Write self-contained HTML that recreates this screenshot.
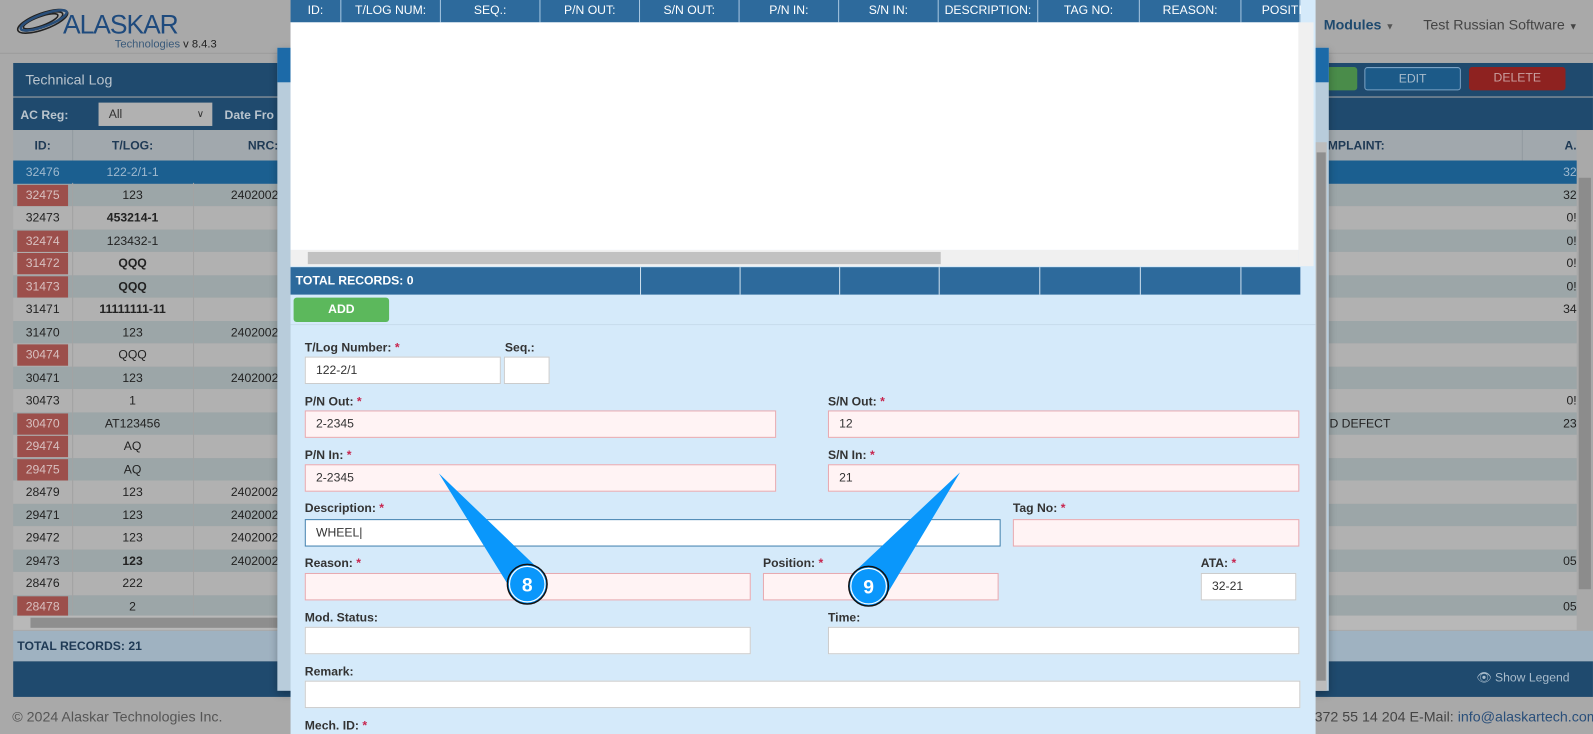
<!DOCTYPE html>
<html><head><meta charset="utf-8">
<style>
*{box-sizing:border-box;margin:0;padding:0}
html,body{width:1593px;height:734px;overflow:hidden;background:#a9a9a9}
body{position:relative;font-family:"Liberation Sans",Arial,sans-serif;font-size:12px;color:#222}
#wrap{position:absolute;left:0;top:0;width:1568px;height:723px;transform:scale(1.0159);transform-origin:0 0}
.a{position:absolute;white-space:nowrap}
.row{position:absolute;left:13px;width:1539px;height:22.5px;line-height:22.5px;font-size:12px;color:#222}
.row.o{background:#9ca6a8}.row.e{background:#b1b1b1}
.row span{position:absolute;top:0;height:22px;text-align:center}
.c1{left:0;width:58px}.c2{left:58px;width:119px}.c3{left:177px;width:84px;text-align:right!important}
.c4{left:1287px}.c5{left:1486px;width:53px;text-align:right!important}
.red{background:#9c4f4b;color:#d8c0c0;left:4px!important;width:50px!important;top:1px!important;height:21px!important;line-height:21px}
.b{font-weight:bold}
.vl{position:absolute;top:0;bottom:0;width:1px;background:#a0a0a0}
.th{position:absolute;top:0;height:22px;line-height:20px;color:#fff;text-align:center;font-size:12px;border-right:1px solid #a7c6e0;font-family:"Liberation Sans Narrow","Liberation Sans",sans-serif}
.lbl{position:absolute;font-weight:bold;font-size:12px;color:#333}
.lbl i{font-style:normal;color:#c7254e}
.in{position:absolute;height:27px;border:1px solid #e7a9b0;background:#fff3f4;padding-left:10px;line-height:25px;font-size:12px;color:#333}
.w{background:#fff;border-color:#ccc}
</style></head><body><div id="wrap">

<svg class="a" style="left:14px;top:6px" width="60" height="30" viewBox="0 0 60 30"><g fill="none" stroke="#222" stroke-width="1.6"><ellipse cx="28" cy="15" rx="26" ry="8" transform="rotate(-20 28 15)"/><ellipse cx="27" cy="15" rx="22" ry="6" transform="rotate(-20 27 15)"/><ellipse cx="26" cy="15" rx="18" ry="4.5" transform="rotate(-20 26 15)"/></g><ellipse cx="29" cy="14" rx="24" ry="6" transform="rotate(-20 29 14)" fill="none" stroke="#2a4f7a" stroke-width="2.5"/></svg>
<div class="a" style="left:62px;top:9px;font-size:26px;color:#1e4a7d;letter-spacing:-1px">ALASKAR</div>
<div class="a" style="left:113px;top:38px;font-size:11px;color:#3a5a7a">Technologies <span style="color:#222">v 8.4.3</span></div>
<div class="a" style="left:0;top:52px;width:1593px;height:1px;background:#9c9c9c"></div>
<div class="a" style="left:1303px;top:16px;font-size:14px;font-weight:bold;color:#1f4a6e">Modules <span style="font-size:9px;color:#555">▼</span></div>
<div class="a" style="left:1401px;top:16px;font-size:14px;color:#444">Test Russian Software <span style="font-size:9px">▼</span></div>

<div class="a" style="left:13px;top:62px;width:1555px;height:33px;background:#1f4a6e"></div>
<div class="a" style="left:25px;top:70px;font-size:14px;color:#b9c4cd">Technical Log</div>
<div class="a" style="left:1306px;top:66px;width:30px;height:23px;background:#4a8c4a;border-radius:3px"></div>
<div class="a" style="left:1343px;top:66px;width:95px;height:23px;border:1px solid #7aa2c4;border-radius:3px;background:#1c5a88;color:#a9bccc;text-align:center;line-height:21px">EDIT</div>
<div class="a" style="left:1446px;top:66px;width:95px;height:23px;border-radius:3px;background:#8e2220;color:#c9a0a0;text-align:center;line-height:21px">DELETE</div>
<div class="a" style="left:13px;top:96px;width:1555px;height:32px;background:#1f4a6e"></div>
<div class="a" style="left:20px;top:106px;font-weight:bold;color:#b9c4cd">AC Reg:</div>
<div class="a" style="left:97px;top:101px;width:112px;height:23px;background:#b1b1b1;padding-left:10px;line-height:23px;color:#333">All<span style="position:absolute;right:8px;font-size:10px">&#8744;</span></div>
<div class="a" style="left:221px;top:106px;font-weight:bold;color:#b9c4cd">Date Fro</div>
<div class="a" style="left:13px;top:128px;width:1539px;height:30px;background:#a1a8ad;font-weight:bold;color:#1f3a55;line-height:30px">
 <span class="a" style="left:0;width:58px;text-align:center">ID:</span><span class="a" style="left:58px;width:119px;text-align:center">T/LOG:</span><span class="a" style="left:177px;width:84px;text-align:right">NRC:</span>
 <span class="a" style="left:1294px">MPLAINT:</span><span class="a" style="left:1486px;width:53px;text-align:right">A.</span>
 <div class="vl" style="left:58px;background:#929aa0"></div><div class="vl" style="left:177px;background:#929aa0"></div><div class="vl" style="left:1485px;background:#929aa0"></div>
</div>
<div class="a" style="left:1552px;top:128px;width:16px;height:493px;background:#a9a9a9"></div>
<div class="a" style="left:1554px;top:175px;width:12px;height:405px;background:#8c8c8c"></div>

<div class="row" style="top:158px;background:#1b5f90;color:#9fb9ce"><span class="c1">32476</span><span class="c2">122-2/1-1</span><span class="c5">32</span></div>
<div class="row o" style="top:180.5px"><span class="c1 red">32475</span><span class="c2">123</span><span class="c3">2402002</span><span class="c5">32</span></div>
<div class="row e" style="top:203px"><span class="c1">32473</span><span class="c2 b">453214-1</span><span class="c5">0!</span></div>
<div class="row o" style="top:225.5px"><span class="c1 red">32474</span><span class="c2">123432-1</span><span class="c5">0!</span></div>
<div class="row e" style="top:248px"><span class="c1 red">31472</span><span class="c2 b">QQQ</span><span class="c5">0!</span></div>
<div class="row o" style="top:270.5px"><span class="c1 red">31473</span><span class="c2 b">QQQ</span><span class="c5">0!</span></div>
<div class="row e" style="top:293px"><span class="c1">31471</span><span class="c2 b">11111111-11</span><span class="c5">34</span></div>
<div class="row o" style="top:315.5px"><span class="c1">31470</span><span class="c2">123</span><span class="c3">2402002</span></div>
<div class="row e" style="top:338px"><span class="c1 red">30474</span><span class="c2">QQQ</span></div>
<div class="row o" style="top:360.5px"><span class="c1">30471</span><span class="c2">123</span><span class="c3">2402002</span></div>
<div class="row e" style="top:383px"><span class="c1">30473</span><span class="c2">1</span><span class="c5">0!</span></div>
<div class="row o" style="top:405.5px"><span class="c1 red">30470</span><span class="c2">AT123456</span><span class="c4">ND DEFECT</span><span class="c5">23</span></div>
<div class="row e" style="top:428px"><span class="c1 red">29474</span><span class="c2">AQ</span></div>
<div class="row o" style="top:450.5px"><span class="c1 red">29475</span><span class="c2">AQ</span></div>
<div class="row e" style="top:473px"><span class="c1">28479</span><span class="c2">123</span><span class="c3">2402002</span></div>
<div class="row o" style="top:495.5px"><span class="c1">29471</span><span class="c2">123</span><span class="c3">2402002</span></div>
<div class="row e" style="top:518px"><span class="c1">29472</span><span class="c2">123</span><span class="c3">2402002</span></div>
<div class="row o" style="top:540.5px"><span class="c1">29473</span><span class="c2 b">123</span><span class="c3">2402002</span><span class="c5">05</span></div>
<div class="row e" style="top:563px"><span class="c1">28476</span><span class="c2">222</span></div>
<div class="row o" style="top:585.5px;height:20px"><span class="c1 red">28478</span><span class="c2">2</span><span class="c5">05</span></div>
<div class="a" style="left:71px;top:180px;width:1px;height:426px;background:#a3a3a3"></div>
<div class="a" style="left:190px;top:180px;width:1px;height:426px;background:#a3a3a3"></div>
<div class="a" style="left:13px;top:606px;width:1539px;height:14px;background:#b8b8b8"></div>
<div class="a" style="left:30px;top:608px;width:245px;height:10px;background:#8e8e8e"></div>
<div class="a" style="left:13px;top:621px;width:1555px;height:30px;background:#9fb2c1"></div>
<div class="a" style="left:17px;top:629px;font-weight:bold;color:#1f3a55">TOTAL RECORDS: 21</div>
<div class="a" style="left:13px;top:651px;width:1555px;height:35px;background:#1f4a6e"></div>
<div class="a" style="left:1453px;top:660px;font-size:12px;color:#a9bccc">&#128065; Show Legend</div>
<div class="a" style="left:12px;top:697px;font-size:14px;color:#555">© 2024 Alaskar Technologies Inc.</div>
<div class="a" style="left:1294px;top:697px;font-size:14px;color:#444">372 55 14 204 E-Mail: <span style="color:#2a4f7a">info@alaskartech.com</span></div>

<div class="a" style="left:273px;top:47px;width:1035px;height:633px;background:#b8ccdb;box-shadow:0 3px 8px rgba(0,0,0,.3)"></div>
<div class="a" style="left:273px;top:47px;width:1035px;height:34px;background:#1c6aa8"></div>
<div class="a" style="left:1295px;top:140px;width:11px;height:540px;background:#bcbcbc"></div>
<div class="a" style="left:1296px;top:150px;width:9px;height:520px;background:#8f8f8f"></div>

<div class="a" style="left:286px;top:0;width:1009px;height:734px;background:#d5eafa"></div>
<div class="a" style="left:286px;top:0;width:994px;height:22px;background:#2d6a9c">
 <div class="th" style="left:0;width:50px">ID:</div><div class="th" style="left:50px;width:98px">T/LOG NUM:</div><div class="th" style="left:148px;width:98px">SEQ.:</div><div class="th" style="left:246px;width:98px">P/N OUT:</div><div class="th" style="left:344px;width:98px">S/N OUT:</div><div class="th" style="left:442px;width:98px">P/N IN:</div><div class="th" style="left:540px;width:98px">S/N IN:</div><div class="th" style="left:638px;width:98px">DESCRIPTION:</div><div class="th" style="left:736px;width:100px">TAG NO:</div><div class="th" style="left:836px;width:100px">REASON:</div><div class="th" style="left:936px;width:58px;text-align:left;padding-left:20px">POSITI</div>
</div>
<div class="a" style="left:286px;top:22px;width:994px;height:224px;background:#fff"></div>
<div class="a" style="left:1278px;top:22px;width:15px;height:240px;background:#f0f0f0"></div>
<div class="a" style="left:286px;top:246px;width:992px;height:16px;background:#f0f0f0"></div>
<div class="a" style="left:303px;top:248px;width:623px;height:12px;background:#c1c1c1"></div>
<div class="a" style="left:286px;top:263px;width:994px;height:27px;background:#2d6a9c"></div>
<div class="a" style="left:630px;top:263px;width:1px;height:27px;background:#cfe0ee;box-shadow:98px 0 #cfe0ee,196px 0 #cfe0ee,294px 0 #cfe0ee,393px 0 #cfe0ee,492px 0 #cfe0ee,591px 0 #cfe0ee"></div>
<div class="a" style="left:291px;top:269px;font-weight:bold;color:#fff">TOTAL RECORDS: 0</div>
<div class="a" style="left:289px;top:293px;width:94px;height:24px;background:#5cb85c;border-radius:3px;color:#fff;font-weight:bold;text-align:center;line-height:23px">ADD</div>
<div class="a" style="left:286px;top:319px;width:1009px;height:1px;background:#c7dcec"></div>

<div class="lbl" style="left:300px;top:335px">T/Log Number: <i>*</i></div>
<div class="lbl" style="left:497px;top:335px">Seq.:</div>
<div class="in w" style="left:300px;top:351px;width:193px">122-2/1</div>
<div class="in w" style="left:496px;top:351px;width:45px"></div>

<div class="lbl" style="left:300px;top:388px">P/N Out: <i>*</i></div>
<div class="lbl" style="left:815px;top:388px">S/N Out: <i>*</i></div>
<div class="in" style="left:300px;top:404px;width:464px">2-2345</div>
<div class="in" style="left:815px;top:404px;width:464px">12</div>

<div class="lbl" style="left:300px;top:441px">P/N In: <i>*</i></div>
<div class="lbl" style="left:815px;top:441px">S/N In: <i>*</i></div>
<div class="in" style="left:300px;top:457px;width:464px">2-2345</div>
<div class="in" style="left:815px;top:457px;width:464px">21</div>

<div class="lbl" style="left:300px;top:493px">Description: <i>*</i></div>
<div class="lbl" style="left:997px;top:493px">Tag No: <i>*</i></div>
<div class="in" style="left:300px;top:511px;width:685px;border-color:#3f7fae;background:#fff">WHEEL|</div>
<div class="in" style="left:997px;top:511px;width:282px"></div>

<div class="lbl" style="left:300px;top:547px">Reason: <i>*</i></div>
<div class="lbl" style="left:751px;top:547px">Position: <i>*</i></div>
<div class="lbl" style="left:1182px;top:547px">ATA: <i>*</i></div>
<div class="in" style="left:300px;top:564px;width:439px"></div>
<div class="in" style="left:751px;top:564px;width:232px"></div>
<div class="in w" style="left:1182px;top:564px;width:94px">32-21</div>

<div class="lbl" style="left:300px;top:601px">Mod. Status:</div>
<div class="lbl" style="left:815px;top:601px">Time:</div>
<div class="in w" style="left:300px;top:617px;width:439px"></div>
<div class="in w" style="left:815px;top:617px;width:464px"></div>

<div class="lbl" style="left:300px;top:654px">Remark:</div>
<div class="in w" style="left:300px;top:670px;width:980px"></div>
<div class="lbl" style="left:300px;top:707px">Mech. ID: <i>*</i></div>

<svg class="a" style="left:0;top:0" width="1593" height="734">
 <polygon points="432,466 530,560 506,585" fill="#0a97fb"/>
 <polygon points="945,465 870,590 842,562" fill="#0a97fb"/>
 <g><circle cx="519" cy="575" r="19.5" fill="#0a97fb" stroke="#111" stroke-width="1.5"/><circle cx="519" cy="575" r="17.5" fill="none" stroke="#fff" stroke-width="1.2"/>
 <text x="519" y="582" font-family="Liberation Sans" font-weight="bold" font-size="19" fill="#fff" text-anchor="middle">8</text></g>
 <g><circle cx="855" cy="577" r="19.5" fill="#0a97fb" stroke="#111" stroke-width="1.5"/><circle cx="855" cy="577" r="17.5" fill="none" stroke="#fff" stroke-width="1.2"/>
 <text x="855" y="584" font-family="Liberation Sans" font-weight="bold" font-size="19" fill="#fff" text-anchor="middle">9</text></g>
</svg>
</div></body></html>
